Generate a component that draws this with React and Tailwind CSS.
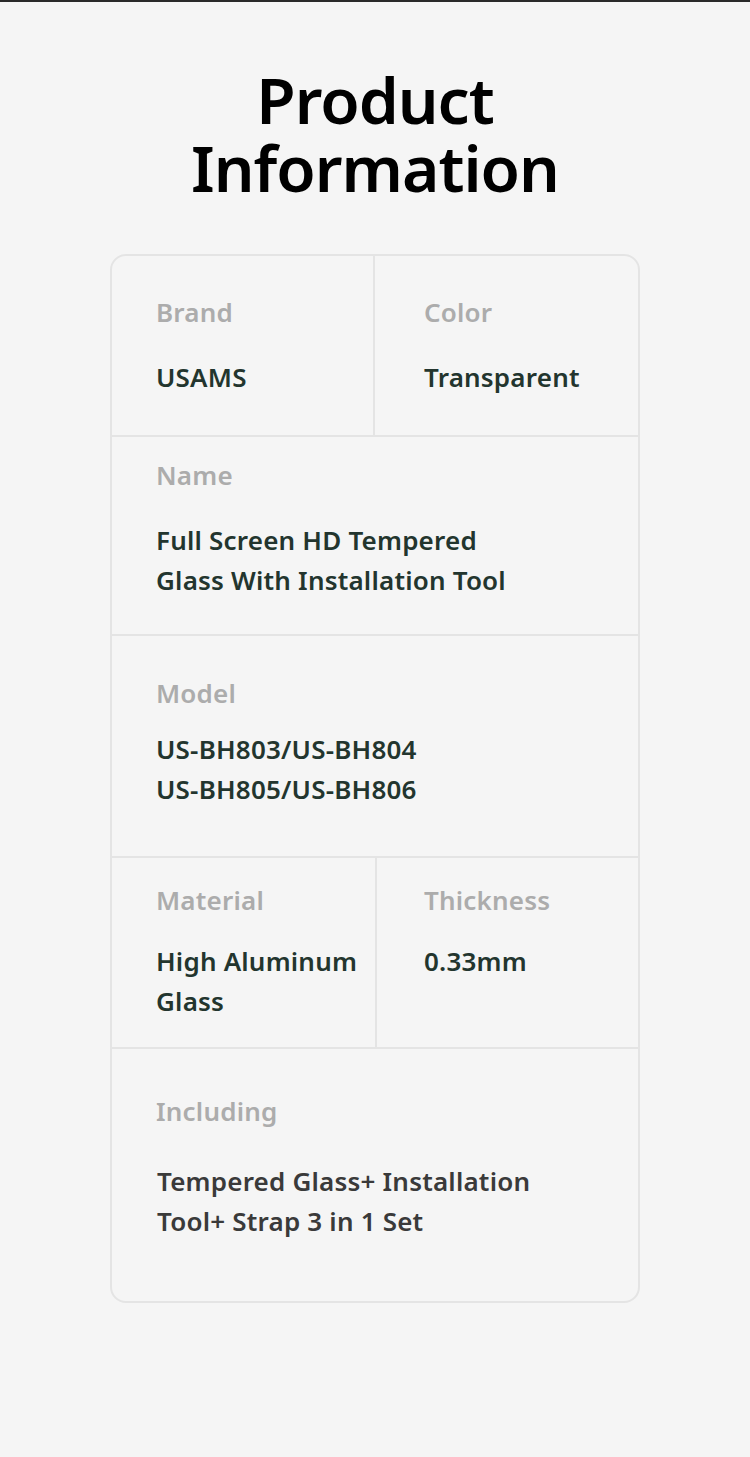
import React from 'react'

const LABEL = 'text-[26px] leading-[40px] font-semibold text-[#acacac] tracking-[0.2px]'
const VALUE = 'text-[26px] leading-[40px] font-semibold text-[#23352e] tracking-[0.2px]'

function Field({ label, value, pt, gap, pb, className = '', valueClass = VALUE }) {
  return (
    <div className={`pl-[44px] pr-2 ${className}`} style={{ paddingTop: pt, paddingBottom: pb }}>
      <div className={LABEL}>{label}</div>
      <div className={valueClass} style={{ marginTop: gap }}>
        {value.map((l, i) => <div key={i} className="whitespace-nowrap">{l}</div>)}
      </div>
    </div>
  )
}

export default function App() {
  return (
    <div className="min-h-[1457px] w-[750px] bg-[#f5f5f5]" style={{ fontFamily: '"Noto Sans", "Open Sans", sans-serif' }}>
      <div className="h-[2px] bg-[#2a2a2a]" />
      <h1 className="pt-[64px] text-center text-[64px] leading-[68px] font-semibold text-black tracking-[-1px]">
        Product<br />Information
      </h1>

      <div className="mx-[110px] mt-[52px] rounded-[16px] border-2 border-[#e4e4e4]">
        <div className="flex border-b-2 border-[#e4e4e4]">
          <Field className="w-[263px] border-r-2 border-[#e4e4e4]" label="Brand" value={['USAMS']} pt={36} gap={25} pb={38} />
          <Field className="flex-1 !pl-[49px]" label="Color" value={['Transparent']} pt={36} gap={25} pb={38} />
        </div>
        <div className="border-b-2 border-[#e4e4e4]">
          <Field label="Name" value={['Full Screen HD Tempered', 'Glass With Installation Tool']} pt={18} gap={25} pb={34} />
        </div>
        <div className="border-b-2 border-[#e4e4e4]">
          <Field label="Model" value={['US-BH803/US-BH804', 'US-BH805/US-BH806']} pt={37} gap={16} pb={47} />
        </div>
        <div className="flex border-b-2 border-[#e4e4e4]">
          <Field className="w-[265px] border-r-2 border-[#e4e4e4]" label="Material" value={['High Aluminum', 'Glass']} pt={22} gap={21} pb={26} />
          <Field className="flex-1 !pl-[47px]" label="Thickness" value={['0.33mm']} pt={22} gap={21} pb={26} />
        </div>
        <Field label="Including" value={['Tempered Glass+ Installation', 'Tool+ Strap 3 in 1 Set']} pt={42} gap={30} pb={60}
          valueClass="text-[26px] leading-[40px] font-semibold text-[#3a3a3a] tracking-[0.2px] pl-[1px]" />
      </div>
    </div>
  )
}
